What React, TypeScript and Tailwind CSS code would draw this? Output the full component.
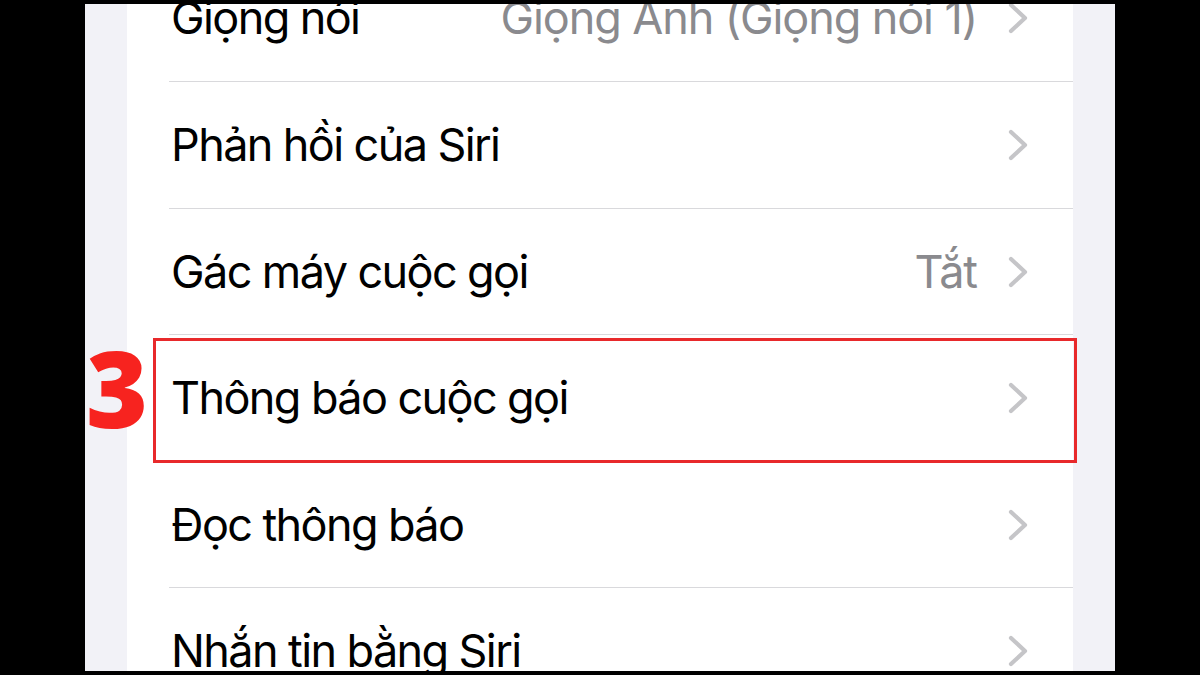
import React from "react";

type Row = {
  label: string;
  value?: string;
  height: number;
  highlight?: boolean;
};

const rows: Row[] = [
  { label: "Giọng nói", value: "Giọng Anh (Giọng nói 1)", height: 127 },
  { label: "Phản hồi của Siri", height: 127 },
  { label: "Gác máy cuộc gọi", value: "Tắt", height: 126 },
  { label: "Thông báo cuộc gọi", height: 127, highlight: true },
  { label: "Đọc thông báo", height: 126 },
  { label: "Nhắn tin bằng Siri", height: 127 },
];

const Chevron = () => (
  <svg width="22" height="34" viewBox="0 0 22 34" className="shrink-0">
    <polyline
      points="4,4 18,17 4,30"
      fill="none"
      stroke="#c5c5c8"
      strokeWidth="4.2"
      strokeLinecap="round"
      strokeLinejoin="round"
    />
  </svg>
);

const App = () => {
  return (
    <div className="w-[1200px] h-[675px] bg-black overflow-hidden flex justify-center pt-[4px] pb-[4px] font-['Inter',sans-serif]">
      <div className="w-[1030px] h-full bg-[#f2f2f7] px-[42px] overflow-hidden">
        <div className="bg-white -mt-[49px]">
          {rows.map((row) => (
            <div key={row.label} className="relative pl-[42px]">
              <div
                className="flex items-center border-b border-[#d9d9dc] pr-[44px] pl-[2px]"
                style={{ height: row.height }}
              >
                <span className="flex-1 text-[45px] text-black tracking-[-1.6px]">
                  {row.label}
                </span>
                {row.value && (
                  <span className="text-[45px] text-[#8a8a8e] mr-[30px] tracking-[-1.1px]">
                    {row.value}
                  </span>
                )}
                <Chevron />
              </div>

              {/* step marker */}
              {row.highlight && (
                <>
                  <div className="absolute left-[26px] top-[3px] w-[924px] h-[125px] border-[3px] border-[#e8292b]" />
                  <span className="absolute -left-[41px] -top-[18px] text-[106px] font-extrabold text-[#f7231f] leading-[140px] font-['Open_Sans',sans-serif]">
                    3
                  </span>
                </>
              )}
            </div>
          ))}
        </div>
      </div>
    </div>
  );
};

export default App;
